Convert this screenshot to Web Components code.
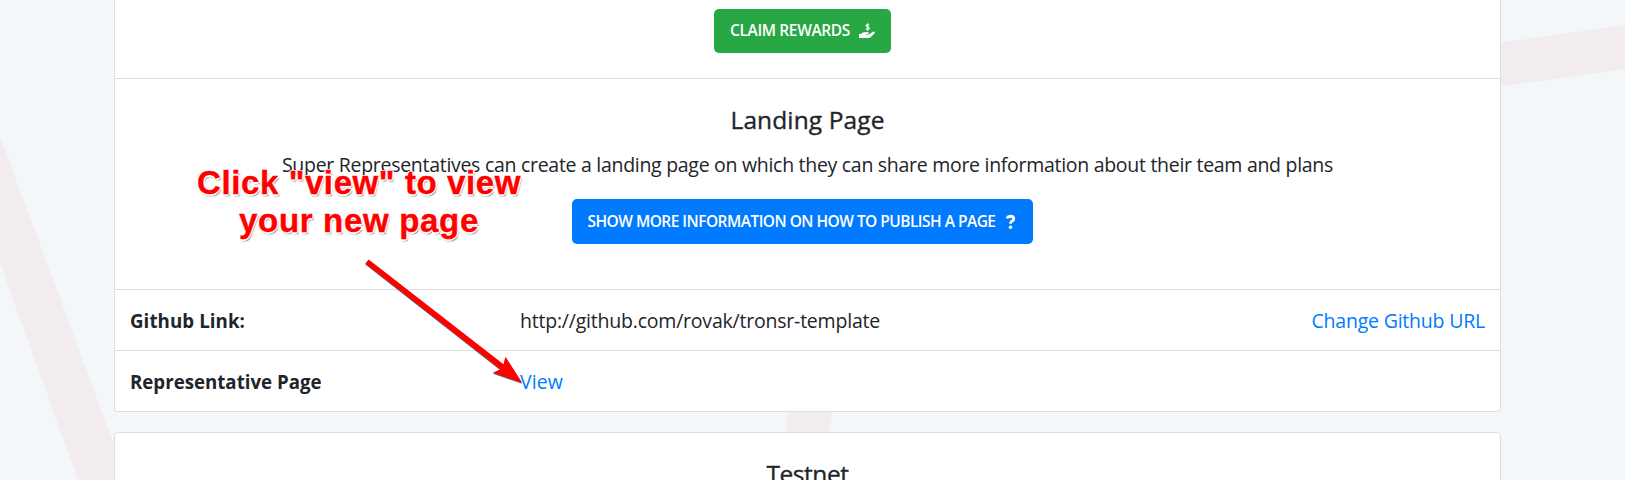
<!DOCTYPE html>
<html lang="en">
<head>
<meta charset="utf-8">
<title>Landing Page</title>
<style>
html, body { margin: 0; height: 480px; overflow: hidden; }
body { background: #f3f7fa; color: #212529; font-family: "Open Sans", "Noto Sans", sans-serif; font-size: 19.5px; }
</style>
</head>
<body>
<account-page></account-page>
<script>
const define = (name, html, ready) => {
  const tpl = document.createElement('template');
  tpl.innerHTML = html;
  customElements.define(name, class extends HTMLElement {
    constructor() {
      super();
      this.attachShadow({ mode: 'open' }).append(tpl.content.cloneNode(true));
    }
    connectedCallback() { if (ready) ready(this); }
  });
};

/* Single line of text, tracked so that it takes the given width */
define('fit-text', `<style>:host{display:inline-block;white-space:pre}</style><slot></slot>`, el => {
  const w = parseFloat(el.getAttribute('w'));
  const n = el.textContent.length;
  const fit = () => {
    el.style.letterSpacing = '0px';
    const natural = el.getBoundingClientRect().width;
    const ls = (w - natural) / n;
    el.style.letterSpacing = ls.toFixed(3) + 'px';
  };
  fit();
});

define('page-backdrop', `<style>
:host{position:absolute;inset:0;z-index:-1}
svg{display:block}
</style>
<svg width="1625" height="480" fill="#f3ecee">
<path d="M0 136 L78 347 L127 480 H78 L0 263Z"/>
<path d="M1490 44 L1625 25 V69 L1490 88Z"/>
<path d="M789 406 H833 L829 438 H785Z"/>
</svg>`);

define('ui-card', `<style>
:host{display:flex;flex-direction:column;box-sizing:border-box;background:#fff;border:1px solid #dddfe2;border-radius:4px}
:host([open-top]){border-top:0;border-radius:0 0 4px 4px}
</style><slot></slot>`);

define('card-section', `<style>
:host{display:flex;flex-direction:column;align-items:center;box-sizing:border-box;border-bottom:1px solid #dddfe2}
:host([last]){border-bottom:0}
</style><slot></slot>`);

define('card-title', `<style>
:host{display:block;font-size:24.5px;line-height:30px;font-weight:500;-webkit-text-stroke:.35px currentColor}
</style><slot></slot>`);

define('info-row', `<style>
:host{display:grid;grid-template-columns:390px 1fr auto;align-items:center;box-sizing:border-box;height:61px;line-height:30px;padding:2px 15px 0;border-bottom:1px solid #dddfe2}
:host([last]){border-bottom:0;height:60px}
.k{font-weight:700;font-size:18.7px}
</style>
<span class="k"><slot name="label"></slot></span><span><slot></slot></span><span><slot name="action"></slot></span>`);

define('text-link', `<style>:host{color:#007bff;cursor:pointer}</style><slot></slot>`);

define('ui-button', `<style>
:host{display:inline-flex;align-items:center;box-sizing:border-box;color:#fff;border-radius:5px;font-weight:600;font-size:15.5px;line-height:20px;padding:0 16px 2px;background:#007bff}
:host([tone=success]){background:#28a745}
::slotted(svg){display:block;flex:none;position:relative;top:1px}
</style><slot></slot>`);

define('callout-note', `<style>
:host{position:absolute;left:190px;top:164px;width:338px;text-align:center;font:700 33px/38px "Liberation Sans",Arial,sans-serif;color:#f00;-webkit-text-stroke:.4px #f00;
text-shadow:-1px -1px 0 #fff,1px -1px 0 #fff,-1px 1px 0 #fff,1px 1px 0 #fff,0 -1.5px 0 #fff,-1.5px 0 0 #fff,1.5px 0 0 #fff,0 1.5px 0 #fff,1px 2px 1.5px rgba(0,0,0,.8)}
div{height:38px}
</style>
<div><fit-text w="324">Click "view" to view</fit-text></div>
<div><fit-text w="240">your new page</fit-text></div>`);

define('callout-arrow', `<style>
:host{position:absolute;left:340px;top:240px}
svg{display:block;filter:drop-shadow(0.5px 1px .6px rgba(0,0,0,.6))}
</style>
<svg width="200" height="160" fill="#f00"><path d="M28.7 19.5 L163.5 124.3 L165.5 116.8 L182.2 142.8 L153 132.8 L160.3 129.2 L25.3 23.5Z"/></svg>`);

define('account-page', `<style>
:host{display:block;position:relative;z-index:0;width:1625px;height:480px;overflow:hidden}
main{display:flex;flex-direction:column;gap:20px;width:1387px;margin-left:114px}
.claim{height:79px;padding-top:9px}
.claim ui-button{width:177px;height:44px;margin-left:-10px}
.landing{height:211px;padding-top:26px}
.landing p{margin:15px 0 0;line-height:30px}
.landing ui-button{width:461px;height:45px;margin:19px -5px 0 -16px}
.next{height:80px;padding-top:26px}
</style>
<page-backdrop></page-backdrop>
<main>
<ui-card open-top>
<card-section class="claim"><ui-button tone="success"><fit-text w="120">CLAIM REWARDS</fit-text><svg width="16" height="16" viewBox="0 0 16 16" fill="#fff" style="margin-left:9px"><path d="M0 10.9 H1.7 L3.4 9.7 Q4.1 9.2 5 9.2 H9.1 Q10 9.2 9.9 10.1 Q9.8 10.9 8.9 10.9 H6.5 V11.5 H10 L13.4 8.9 Q14.5 8.2 15.4 8.8 Q16.3 9.5 15.5 10.4 L11.6 14.3 Q10.8 15 9.7 15 H0Z"/><path d="M10.2 2.2 Q9.5 1.6 8.5 1.6 Q7.1 1.6 7.1 2.7 Q7.1 3.6 8.6 3.9 Q10.2 4.2 10.2 5.2 Q10.2 6.4 8.6 6.4 Q7.5 6.4 6.8 5.7 M8.6 .2 V7.8" fill="none" stroke="#fff" stroke-width="1.1"/></svg></ui-button></card-section>
<card-section class="landing">
<card-title><fit-text w="154">Landing Page</fit-text></card-title>
<p><fit-text w="1051">Super Representatives can create a landing page on which they can share more information about their team and plans</fit-text></p>
<ui-button><fit-text w="408">SHOW MORE INFORMATION ON HOW TO PUBLISH A PAGE</fit-text><svg width="11" height="16" viewBox="0 0 10 16" style="margin-left:9px"><path d="M1.2 4.3 Q2.6 2.2 4.9 2.2 Q8.2 2.3 8.2 4.8 Q8.2 6.2 6.6 7.1 Q5 8 5 9.8" fill="none" stroke="#fff" stroke-width="2.9"/><circle cx="5" cy="13.3" r="1.8" fill="#fff"/></svg></ui-button>
</card-section>
<info-row><fit-text slot="label" w="115">Github Link:</fit-text><fit-text w="360">http://github.com/rovak/tronsr-template</fit-text><text-link slot="action"><fit-text w="173.5">Change Github URL</fit-text></text-link></info-row>
<info-row last><fit-text slot="label" w="191.5">Representative Page</fit-text><text-link><fit-text w="43">View</fit-text></text-link></info-row>
</ui-card>
<ui-card class="next"><card-title style="align-self:center"><fit-text w="82">Testnet</fit-text></card-title></ui-card>
</main>
<callout-note></callout-note>
<callout-arrow></callout-arrow>`);
</script>
</body>
</html>
